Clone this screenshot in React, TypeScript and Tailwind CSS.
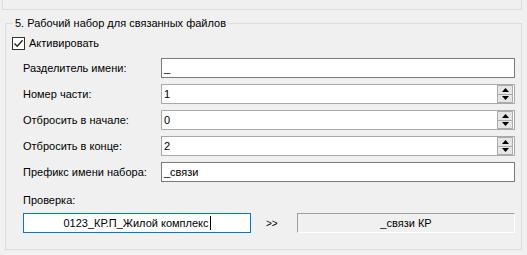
import React from 'react'

const font = { fontFamily: '"Liberation Sans", Arial, sans-serif' }

function Spinner({ value }: { value: string }) {
  return (
    <div className="flex h-[20px] w-[354px] items-center border border-[#a9a9a9] bg-white">
      <span className="flex-1 pl-[2px] leading-[18px]">{value}</span>
      <div className="mr-[1px] flex h-[18px] w-[16px] flex-col">
        <div className="flex flex-1 items-center justify-center border border-[#acacac] bg-[#e5e5e5]">
          <svg width="7" height="4" viewBox="0 0 7 4"><path d="M0 4 L3.5 0 L7 4 Z" fill="#000" /></svg>
        </div>
        <div className="flex flex-1 items-center justify-center border border-t-0 border-[#acacac] bg-[#e5e5e5]">
          <svg width="7" height="4" viewBox="0 0 7 4"><path d="M0 0 L7 0 L3.5 4 Z" fill="#000" /></svg>
        </div>
      </div>
    </div>
  )
}

function TextBox({ value }: { value: string }) {
  return (
    <div className="h-[20px] w-[354px] border border-[#7a7a7a] bg-white pl-[2px] leading-[18px]">{value}</div>
  )
}

function Row({ label, children }: { label: string; children: React.ReactNode }) {
  return (
    <div className="flex h-[20px] items-center">
      <span className="w-[138px]">{label}</span>
      {children}
    </div>
  )
}

export default function App() {
  return (
    <div className="h-[255px] w-[527px] overflow-hidden bg-[#f0f0f0] text-[11px] text-black" style={font}>
      <div className="ml-[2px] h-[10px] w-[520px] border-x border-b border-[#dcdcdc]" />
      <fieldset className="ml-[5px] mt-[6px] h-[234px] w-[517px] border border-[#dcdcdc] pl-[6px] pr-[6px]">
        <legend className="ml-[1px] px-[2px] text-[11px] leading-[14px]">5. Рабочий набор для связанных файлов</legend>
        <div className="mt-[7px] flex items-center gap-[4px]">
          <div className="flex h-[13px] w-[13px] items-center justify-center border border-[#333] bg-white">
            <svg width="11" height="11" viewBox="0 0 11 11">
              <path d="M1.5 5.5 L4.2 8.3 L9.6 2.2" fill="none" stroke="#222" strokeWidth="1.3" />
            </svg>
          </div>
          <span className="leading-[13px]">Активировать</span>
        </div>
        <div className="ml-[11px] mt-[8px] flex flex-col gap-[6px]">
          <Row label="Разделитель имени:"><TextBox value="_" /></Row>
          <Row label="Номер части:"><Spinner value="1" /></Row>
          <Row label="Отбросить в начале:"><Spinner value="0" /></Row>
          <Row label="Отбросить в конце:"><Spinner value="2" /></Row>
          <Row label="Префикс имени набора:"><TextBox value="_связи" /></Row>
        </div>
        <div className="ml-[11px] mt-[12px] leading-[13px]">Проверка:</div>
        <div className="ml-[11px] mt-[6px] flex h-[20px] items-center">
          <div className="flex h-[20px] w-[228px] items-center justify-center border border-[#0078d7] bg-white">
            <span>0123_КР.П_Жилой комплекс</span>
            <span className="ml-[1px] inline-block h-[14px] w-[1px] bg-black" />
          </div>
          <span className="ml-[15px] w-[31px] text-[10px]">&gt;&gt;</span>
          <div className="flex h-[20px] w-[218px] items-center justify-center border border-[#a0a0a0] border-b-white border-r-white bg-[#f0f0f0]">
            _связи КР
          </div>
        </div>
      </fieldset>
    </div>
  )
}
